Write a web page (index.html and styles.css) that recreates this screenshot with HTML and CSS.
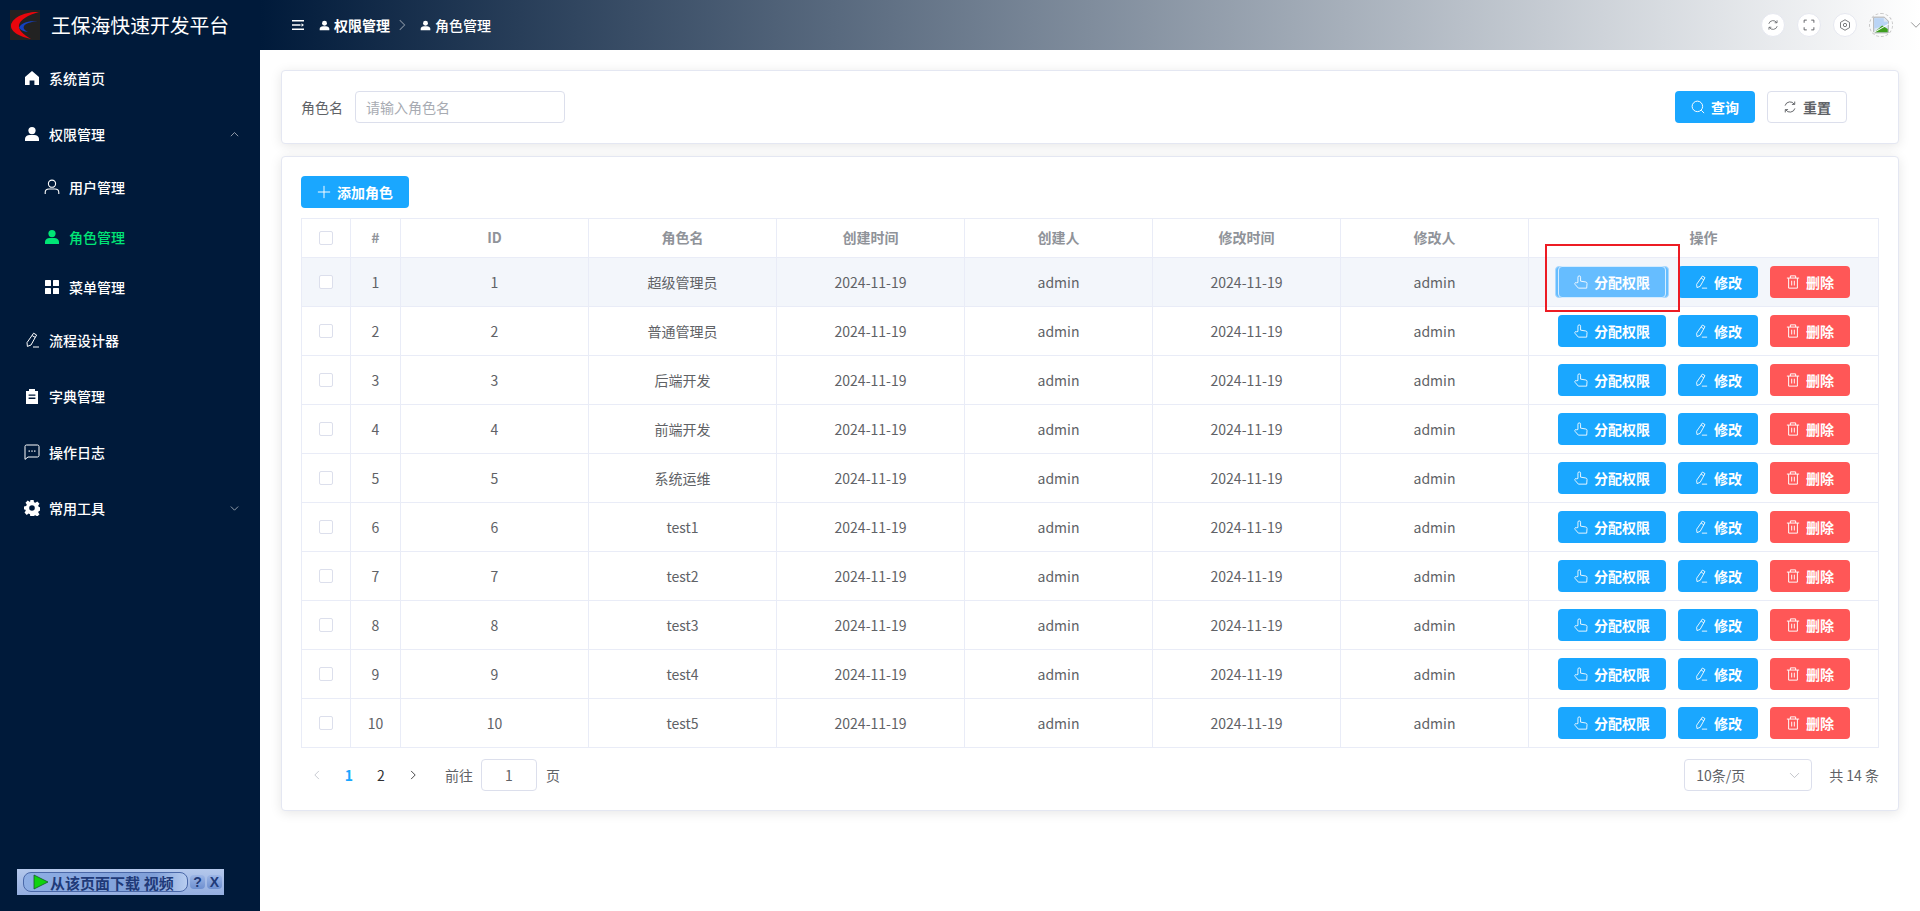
FILE: index.html
```html
<!DOCTYPE html>
<html lang="zh-CN">
<head>
    <meta charset="UTF-8">
    <title>角色管理</title>
    <link rel="stylesheet" href="styles.css">
</head>
<body>
    <svg class="sprites" aria-hidden="true">
        <symbol id="i-user-fill" viewBox="0 0 16 16"><circle cx="8" cy="4.6" r="3.6"/><path d="M1 15v-2.2C1 10.4 3.4 9 5.6 9h4.8c2.2 0 4.6 1.4 4.6 3.8V15z"/></symbol>
        <symbol id="i-user" viewBox="0 0 16 16"><g fill="none" stroke="currentColor" stroke-width="1.1"><circle cx="8" cy="4.7" r="3.6"/><path d="M1.2 15v-1.6c0-2 1.8-3.4 3.8-3.4h6c2 0 3.8 1.4 3.8 3.4V15"/></g></symbol>
        <symbol id="i-menu" viewBox="0 0 16 16"><rect x="1" y="1" width="6" height="6" rx=".6"/><rect x="9" y="1" width="6" height="6" rx=".6"/><rect x="1" y="9" width="6" height="6" rx=".6"/><rect x="9" y="9" width="6" height="6" rx=".6"/></symbol>
        <symbol id="i-home" viewBox="0 0 16 16"><path d="M8 1 1 7v8h4.6v-4.4h4.8V15H15V7z"/></symbol>
        <symbol id="i-edit" viewBox="0 0 16 16"><g fill="none" stroke="currentColor" stroke-width="1"><path d="M9.6 1.2 12.6 3 7 13l-3.6 1.4L3 10.6z"/><path d="M8.2 3.6l3 1.8M9 15h6"/></g></symbol>
        <symbol id="i-clip" viewBox="0 0 16 16"><path d="M5 1h6v2h3v13H2V3h3zM4.6 6.4v1.4h6.8V6.4zm0 3.2v1.4h6.8V9.6z" fill-rule="evenodd"/></symbol>
        <symbol id="i-chat" viewBox="0 0 16 16"><path d="M1 2.4C1 1.6 1.6 1 2.4 1h11.2c.8 0 1.4.6 1.4 1.4v9.2c0 .8-.6 1.4-1.4 1.4H4L1 15.4z" fill="none" stroke="currentColor" stroke-width="1"/><g><rect x="4.6" y="6.4" width="1.2" height="1.4"/><rect x="7.4" y="6.4" width="1.2" height="1.4"/><rect x="10.2" y="6.4" width="1.2" height="1.4"/></g></symbol>
        <symbol id="i-gear" viewBox="0 0 16 16"><path d="M6.400 0h3.200l.4 2.200 1.400.6 1.900-1.300 2.200 2.300-1.300 1.800.6 1.400 2.200.4v3.200l-2.200.4-.6 1.400 1.300 1.800-2.200 2.300-1.900-1.300-1.400.6-.4 2.200H6.400L6 14.200l-1.400-.6-1.900 1.300-2.200-2.300 1.300-1.800-.6-1.400L0 9.600V6.400L2.200 6l.6-1.400L1.500 2.800l2.200-2.300 1.900 1.300L6 2.200zM8 5.200a2.800 2.800 0 1 0 0 5.600 2.800 2.800 0 0 0 0-5.600z" fill-rule="evenodd"/></symbol>
        <symbol id="i-hand" viewBox="0 0 16 16"><path d="M4.500 8.500V2.500a1.500 1.500 0 0 1 3 0V7l6 1c.9.200 1.500.9 1.400 1.800L14.500 15H5L1.200 10.700c-.5-.7-.3-1.500.3-1.900.6-.4 1.300-.2 1.700.2z" fill="none" stroke="currentColor" stroke-width="1"/></symbol>
        <symbol id="i-trash" viewBox="0 0 16 16"><g fill="none" stroke="currentColor" stroke-width="1.100"><path d="M1 3.500h14M5 3.500V1h6v2.500M3 3.500V15h10V3.500M6.500 6.500v5.500M9.500 6.500v5.500"/></g></symbol>
        <symbol id="i-refresh" viewBox="0 0 16 16"><g fill="none" stroke="currentColor" stroke-width="1.100"><path d="M2.400 6.400A5.800 5.800 0 0 1 13 5M13.600 9.600A5.800 5.800 0 0 1 3 11"/><path d="M13.400 1.800V5h-3.200M2.600 14.200V11h3.200"/></g></symbol>
        <symbol id="i-search" viewBox="0 0 16 16"><g fill="none" stroke="currentColor" stroke-width="1.100"><circle cx="7.300" cy="7.300" r="6"/><path d="m11.700 11.700 3.300 3.300"/></g></symbol>
        <symbol id="i-full" viewBox="0 0 16 16"><path d="M1.500 5V1.500H5M11 1.500h3.500V5M14.500 11v3.500H11M5 14.500H1.500V11" fill="none" stroke="currentColor" stroke-width="1.300"/></symbol>
        <symbol id="i-cog" viewBox="0 0 16 16"><g fill="none" stroke="currentColor" stroke-width="1.100"><path d="M8 1l6 3.500v7L8 15l-6-3.500v-7z"/><circle cx="8" cy="8" r="2.200"/></g></symbol>
        <symbol id="i-down" viewBox="0 0 16 16"><path d="M1.500 4.500 8 11l6.500-6.500" fill="none" stroke="currentColor" stroke-width="1"/></symbol>
        <symbol id="i-up" viewBox="0 0 16 16"><path d="M1.500 11 8 4.500 14.500 11" fill="none" stroke="currentColor" stroke-width="1"/></symbol>
        <symbol id="i-left" viewBox="0 0 16 16"><path d="M11 1.500 4.500 8l6.500 6.500" fill="none" stroke="currentColor" stroke-width="1.400"/></symbol>
        <symbol id="i-right" viewBox="0 0 16 16"><path d="M5 1.500 11.500 8 5 14.500" fill="none" stroke="currentColor" stroke-width="1.400"/></symbol>
    </svg>

    <aside class="sidebar">
        <div class="brand">
            <svg class="logo" viewBox="0 0 30 30">
                <rect width="30" height="30" fill="#222"/>
                <path d="M29 2C15 1 2 8 1 15c-1 7 10 12 20 14-8-5-13-9-12-14C10 10 18 5 29 2z" fill="#e8060c"/>
                <path d="M29 12c-8-2-18 0-20 6 3 3 7 4 9 4-4-2-5-4-4-6 2-3 9-5 15-4z" fill="#1440c0"/>
            </svg>
            <span class="brand-name">王保海快速开发平台</span>
        </div>
        <nav class="nav">
            <a class="nav-item"><svg class="nav-icon"><use href="#i-home"/></svg>系统首页</a>
            <a class="nav-item"><svg class="nav-icon"><use href="#i-user-fill"/></svg>权限管理<svg class="nav-arrow"><use href="#i-up"/></svg></a>
            <a class="nav-sub"><svg class="nav-icon"><use href="#i-user"/></svg>用户管理</a>
            <a class="nav-sub active"><svg class="nav-icon"><use href="#i-user-fill"/></svg>角色管理</a>
            <a class="nav-sub"><svg class="nav-icon"><use href="#i-menu"/></svg>菜单管理</a>
            <a class="nav-item"><svg class="nav-icon"><use href="#i-edit"/></svg>流程设计器</a>
            <a class="nav-item"><svg class="nav-icon"><use href="#i-clip"/></svg>字典管理</a>
            <a class="nav-item"><svg class="nav-icon"><use href="#i-chat"/></svg>操作日志</a>
            <a class="nav-item"><svg class="nav-icon"><use href="#i-gear"/></svg>常用工具<svg class="nav-arrow"><use href="#i-down"/></svg></a>
        </nav>
    </aside>

    <header class="topbar">
        <svg class="hamburger" viewBox="0 0 12 10"><path d="M0 0h12v1.600H0zM0 4.200h8.500v1.600H0zM0 8.400h12V10H0zM9.500 3.200 12 5 9.500 6.800z"/></svg>
        <div class="crumbs">
            <span class="crumb strong"><svg class="crumb-icon"><use href="#i-user-fill"/></svg>权限管理</span>
            <svg class="crumb-sep"><use href="#i-right"/></svg>
            <span class="crumb"><svg class="crumb-icon"><use href="#i-user-fill"/></svg>角色管理</span>
        </div>
        <div class="top-actions">
            <span class="round-btn"><svg><use href="#i-refresh"/></svg></span>
            <span class="round-btn"><svg><use href="#i-full"/></svg></span>
            <span class="round-btn"><svg><use href="#i-cog"/></svg></span>
            <span class="avatar">
                <svg viewBox="0 0 16 16">
                    <path d="M1.500 1h9.500l3.500 3.500V15h-13z" fill="#dbe6f5" stroke="#a8a8a8" stroke-width=".8"/>
                    <path d="M2 2h8.500v3H14v3L2 11z" fill="#b9d4f5"/>
                    <path d="M2 14.500 9 8.500l5 3v3z" fill="#3e9f1e"/>
                    <path d="M1 15 15 7" stroke="#fff" stroke-width="1"/>
                </svg>
            </span>
            <svg class="avatar-arrow"><use href="#i-down"/></svg>
        </div>
    </header>

    <main class="main">
        <section class="card search-card">
            <label class="field-label">角色名</label>
            <input class="text-input" placeholder="请输入角色名">
            <div class="search-actions">
                <button class="btn primary wide"><svg class="btn-icon"><use href="#i-search"/></svg>查询</button>
                <button class="btn plain wide"><svg class="btn-icon"><use href="#i-refresh"/></svg>重置</button>
            </div>
        </section>

        <section class="card table-card">
            <button class="btn primary add-btn"><svg class="btn-icon plus" viewBox="0 0 16 16"><path d="M8 1v14M1 8h14" fill="none" stroke="currentColor" stroke-width="1.100"/></svg>添加角色</button>
            <table class="role-table">
                <colgroup>
                    <col class="col-check"><col class="col-index"><col class="col-data"><col class="col-data"><col class="col-data"><col class="col-data"><col class="col-data"><col class="col-data"><col>
                </colgroup>
                <thead>
                    <tr><th><span class="check"></span></th><th>#</th><th>ID</th><th>角色名</th><th>创建时间</th><th>创建人</th><th>修改时间</th><th>修改人</th><th>操作</th></tr>
                </thead>
                <tbody>
                    <tr class="hovered"><td><span class="check"></span></td><td>1</td><td>1</td><td>超级管理员</td><td>2024-11-19</td><td>admin</td><td>2024-11-19</td><td>admin</td><td><div class="row-actions"><span class="focus-mark"><button class="btn primary grant hover-btn"><svg class="btn-icon"><use href="#i-hand"/></svg>分配权限</button></span><button class="btn primary"><svg class="btn-icon"><use href="#i-edit"/></svg>修改</button><button class="btn danger"><svg class="btn-icon"><use href="#i-trash"/></svg>删除</button></div></td></tr>
                    <tr><td><span class="check"></span></td><td>2</td><td>2</td><td>普通管理员</td><td>2024-11-19</td><td>admin</td><td>2024-11-19</td><td>admin</td><td><div class="row-actions"><button class="btn primary grant"><svg class="btn-icon"><use href="#i-hand"/></svg>分配权限</button><button class="btn primary"><svg class="btn-icon"><use href="#i-edit"/></svg>修改</button><button class="btn danger"><svg class="btn-icon"><use href="#i-trash"/></svg>删除</button></div></td></tr>
                    <tr><td><span class="check"></span></td><td>3</td><td>3</td><td>后端开发</td><td>2024-11-19</td><td>admin</td><td>2024-11-19</td><td>admin</td><td><div class="row-actions"><button class="btn primary grant"><svg class="btn-icon"><use href="#i-hand"/></svg>分配权限</button><button class="btn primary"><svg class="btn-icon"><use href="#i-edit"/></svg>修改</button><button class="btn danger"><svg class="btn-icon"><use href="#i-trash"/></svg>删除</button></div></td></tr>
                    <tr><td><span class="check"></span></td><td>4</td><td>4</td><td>前端开发</td><td>2024-11-19</td><td>admin</td><td>2024-11-19</td><td>admin</td><td><div class="row-actions"><button class="btn primary grant"><svg class="btn-icon"><use href="#i-hand"/></svg>分配权限</button><button class="btn primary"><svg class="btn-icon"><use href="#i-edit"/></svg>修改</button><button class="btn danger"><svg class="btn-icon"><use href="#i-trash"/></svg>删除</button></div></td></tr>
                    <tr><td><span class="check"></span></td><td>5</td><td>5</td><td>系统运维</td><td>2024-11-19</td><td>admin</td><td>2024-11-19</td><td>admin</td><td><div class="row-actions"><button class="btn primary grant"><svg class="btn-icon"><use href="#i-hand"/></svg>分配权限</button><button class="btn primary"><svg class="btn-icon"><use href="#i-edit"/></svg>修改</button><button class="btn danger"><svg class="btn-icon"><use href="#i-trash"/></svg>删除</button></div></td></tr>
                    <tr><td><span class="check"></span></td><td>6</td><td>6</td><td>test1</td><td>2024-11-19</td><td>admin</td><td>2024-11-19</td><td>admin</td><td><div class="row-actions"><button class="btn primary grant"><svg class="btn-icon"><use href="#i-hand"/></svg>分配权限</button><button class="btn primary"><svg class="btn-icon"><use href="#i-edit"/></svg>修改</button><button class="btn danger"><svg class="btn-icon"><use href="#i-trash"/></svg>删除</button></div></td></tr>
                    <tr><td><span class="check"></span></td><td>7</td><td>7</td><td>test2</td><td>2024-11-19</td><td>admin</td><td>2024-11-19</td><td>admin</td><td><div class="row-actions"><button class="btn primary grant"><svg class="btn-icon"><use href="#i-hand"/></svg>分配权限</button><button class="btn primary"><svg class="btn-icon"><use href="#i-edit"/></svg>修改</button><button class="btn danger"><svg class="btn-icon"><use href="#i-trash"/></svg>删除</button></div></td></tr>
                    <tr><td><span class="check"></span></td><td>8</td><td>8</td><td>test3</td><td>2024-11-19</td><td>admin</td><td>2024-11-19</td><td>admin</td><td><div class="row-actions"><button class="btn primary grant"><svg class="btn-icon"><use href="#i-hand"/></svg>分配权限</button><button class="btn primary"><svg class="btn-icon"><use href="#i-edit"/></svg>修改</button><button class="btn danger"><svg class="btn-icon"><use href="#i-trash"/></svg>删除</button></div></td></tr>
                    <tr><td><span class="check"></span></td><td>9</td><td>9</td><td>test4</td><td>2024-11-19</td><td>admin</td><td>2024-11-19</td><td>admin</td><td><div class="row-actions"><button class="btn primary grant"><svg class="btn-icon"><use href="#i-hand"/></svg>分配权限</button><button class="btn primary"><svg class="btn-icon"><use href="#i-edit"/></svg>修改</button><button class="btn danger"><svg class="btn-icon"><use href="#i-trash"/></svg>删除</button></div></td></tr>
                    <tr><td><span class="check"></span></td><td>10</td><td>10</td><td>test5</td><td>2024-11-19</td><td>admin</td><td>2024-11-19</td><td>admin</td><td><div class="row-actions"><button class="btn primary grant"><svg class="btn-icon"><use href="#i-hand"/></svg>分配权限</button><button class="btn primary"><svg class="btn-icon"><use href="#i-edit"/></svg>修改</button><button class="btn danger"><svg class="btn-icon"><use href="#i-trash"/></svg>删除</button></div></td></tr>
                </tbody>
            </table>
            <div class="pager">
                <svg class="pager-arrow disabled"><use href="#i-left"/></svg>
                <span class="pager-num current">1</span>
                <span class="pager-num">2</span>
                <svg class="pager-arrow"><use href="#i-right"/></svg>
                <span class="pager-text goto">前往</span>
                <span class="pager-box">1</span>
                <span class="pager-text">页</span>
                <span class="pager-select">10条/页<svg class="select-arrow"><use href="#i-down"/></svg></span>
                <span class="pager-text total">共 14 条</span>
            </div>
        </section>
    </main>

    <div class="download-bar">
        <span class="download-main"><svg class="play" viewBox="0 0 16 16"><path d="M1 1l14 7-14 7z" fill="#0fd30f" stroke="#145c2a" stroke-width=".8"/></svg>从该页面下载 视频</span>
        <span class="download-small">?</span>
        <span class="download-small">X</span>
    </div>
</body>
</html>
```

FILE: styles.css
```css
*, *::before, *::after {
    margin: 0;
    padding: 0;
    box-sizing: border-box;
}

html, body {
    height: 100%;
    overflow: hidden;
}

body {
    display: grid;
    grid-template-columns: 260px minmax(0, 1fr);
    grid-template-rows: 50px 1fr;
    font-family: "Noto Sans CJK SC", "Noto Sans", sans-serif;
    font-size: 14px;
    color: #606266;
    background: #fff;
}

svg {
    fill: currentColor;
}

.sprites {
    display: none;
}

/* sidebar */
.sidebar {
    grid-column: 1;
    grid-row: 1 / 3;
    background: #001a3a;
    color: #fff;
}

.brand {
    height: 50px;
    display: flex;
    align-items: center;
    padding-left: 10px;
}

.logo {
    width: 30px;
    height: 30px;
    margin-right: 11px;
}

.brand-name {
    font-size: 19.8px;
    line-height: 30px;
}

.nav-item,
.nav-sub {
    display: flex;
    align-items: center;
    font-size: 14px;
    font-weight: 500;
}

.nav-item {
    height: 56px;
    padding-left: 24px;
}

.nav-sub {
    height: 50px;
    padding-left: 44px;
}

.nav-sub.active {
    color: #00e676;
}

.nav-icon {
    width: 16px;
    height: 16px;
    margin-right: 9px;
    flex: none;
}

.nav-arrow {
    width: 9px;
    height: 9px;
    margin-left: auto;
    margin-right: 21px;
}

/* top bar */
.topbar {
    grid-column: 2;
    grid-row: 1;
    display: flex;
    align-items: center;
    padding-left: 32px;
    color: #fff;
    background: linear-gradient(to right, #001a3a 0%, #fff 100%);
    overflow: hidden;
}

.hamburger {
    width: 12px;
    height: 10px;
}

.crumbs {
    display: flex;
    align-items: center;
    margin-left: 15px;
    font-size: 14px;
}

.crumb {
    display: flex;
    align-items: center;
    font-weight: 500;
}

.crumb.strong {
    font-weight: 700;
}

.crumb-icon {
    width: 11px;
    height: 11px;
    margin-right: 4px;
}

.crumb-sep {
    width: 12px;
    height: 12px;
    margin: 0 12px 0 6px;
    color: #7d8a9b;
}

.top-actions {
    margin-left: auto;
    display: flex;
    align-items: center;
    gap: 12px;
    margin-right: -2px;
    color: #606266;
}

.round-btn {
    width: 24px;
    height: 24px;
    border-radius: 50%;
    background: #fff;
    border: 1px solid #e6e8f0;
    display: flex;
    align-items: center;
    justify-content: center;
}

.round-btn svg {
    width: 12px;
    height: 12px;
}

.avatar {
    width: 24px;
    height: 24px;
    border-radius: 50%;
    overflow: hidden;
    border: 1px dashed #c8c8c8;
    display: flex;
    align-items: center;
    justify-content: center;
}

.avatar svg {
    width: 18px;
    height: 18px;
}

.avatar-arrow {
    width: 12px;
    height: 12px;
    color: #777;
    margin-left: 5px;
}

/* main */
.main {
    padding: 20px 21px 0;
    grid-column: 2;
    grid-row: 2;
    min-width: 0;
}

.card {
    background: #fff;
    border: 1px solid #e4e7f2;
    border-radius: 4px;
    box-shadow: 0 2px 12px rgba(0, 0, 0, 0.1);
    padding: 19px;
}

.search-card {
    display: flex;
    align-items: center;
    height: 74px;
    margin-bottom: 12px;
}

.field-label {
    width: 54px;
    color: #606266;
}

.text-input {
    width: 210px;
    height: 32px;
    border: 1px solid #dcdfec;
    border-radius: 4px;
    padding: 0 10px;
    font: inherit;
    outline: none;
}

.text-input::placeholder {
    color: #a8abb2;
}

.search-actions {
    margin-left: auto;
    display: flex;
    gap: 12px;
    margin-right: 32px;
}

.btn {
    height: 32px;
    display: inline-flex;
    align-items: center;
    justify-content: center;
    border: 1px solid transparent;
    border-radius: 4px;
    font: inherit;
    font-weight: 600;
    white-space: nowrap;
}

.btn.primary {
    background: #1aa7ff;
    color: #fff;
}

.btn.danger {
    background: #ff5757;
    color: #fff;
    width: 80px;
}

.btn.plain {
    background: #fff;
    border-color: #dcdfec;
    color: #606266;
}

.btn.wide {
    width: 80px;
}

.btn-icon {
    width: 14px;
    height: 14px;
    margin-right: 6px;
    flex: none;
}

.add-btn {
    width: 108px;
    display: flex;
    margin-bottom: 10px;
}

/* table */
.role-table {
    width: 100%;
    table-layout: fixed;
    border-collapse: collapse;
}

.role-table th,
.role-table td {
    border: 1px solid #e9ecf7;
    text-align: center;
    font-size: 14px;
}

.role-table th {
    height: 39px;
    padding-bottom: 2px;
    color: #909399;
    font-weight: 700;
}

.role-table td {
    height: 49px;
    color: #606266;
}

.role-table tr.hovered td {
    background: #f3f6fb;
}

.col-check {
    width: 49px;
}

.col-index {
    width: 50px;
}

.col-data {
    width: 188px;
}

.check {
    display: block;
    width: 14px;
    height: 14px;
    margin: 0 auto;
    border: 1px solid #dcdfec;
    border-radius: 2px;
    background: #fff;
}

.role-table th .check {
    margin-top: 2px;
}

.row-actions {
    display: flex;
    gap: 12px;
    padding-left: 29px;
}

.row-actions .btn.primary {
    width: 80px;
    flex: none;
}

.row-actions .btn.primary.grant {
    width: 108px;
}

.row-actions .btn.danger {
    flex: none;
}

.focus-mark {
    position: relative;
    display: inline-flex;
}

/* red annotation box from the screenshot */
.focus-mark::after {
    content: "";
    position: absolute;
    left: -13px;
    top: -22px;
    width: 135px;
    height: 68px;
    border: 2px solid #ed1c24;
}

.focus-mark::before {
    content: "";
    position: absolute;
    left: -3px;
    right: -3px;
    top: 0;
    bottom: 0;
    border: 1px solid #a9d8ff;
    border-radius: 4px;
    background: #66bdff;
}

.btn.primary.hover-btn {
    position: relative;
    background: #66bdff;
    border-color: #d4ecff;
}

/* pager */
.pager {
    display: flex;
    align-items: center;
    height: 32px;
    margin-top: 11px;
}

.pager-arrow {
    width: 10px;
    height: 10px;
    color: #303133;
    margin-left: 11px;
}

.pager-arrow.disabled {
    color: #c0c4cc;
}

.pager-num {
    width: 32px;
    text-align: center;
    color: #303133;
}

.pager-num.current {
    color: #1aa7ff;
    font-weight: 700;
    margin-left: 11px;
}

.pager-text {
    color: #606266;
}

.goto {
    margin-left: 27px;
}

.pager-box {
    width: 56px;
    height: 32px;
    margin: 0 9px 0 8px;
    border: 1px solid #dcdfec;
    border-radius: 4px;
    display: flex;
    align-items: center;
    justify-content: center;
}

.pager-select {
    width: 128px;
    height: 32px;
    margin-left: auto;
    border: 1px solid #dcdfec;
    border-radius: 4px;
    display: flex;
    align-items: center;
    padding: 0 11px;
}

.select-arrow {
    width: 11px;
    height: 11px;
    margin-left: auto;
    color: #a8abb2;
}

.total {
    margin-left: 17px;
}

/* video download helper sitting over the page */
.download-bar {
    position: fixed;
    left: 17px;
    top: 869px;
    width: 207px;
    height: 26px;
    display: flex;
    align-items: center;
    gap: 2px;
    padding: 0 2px 0 6px;
    background: linear-gradient(#b4c8ec, #94aee0);
    font-family: "Liberation Serif", "Noto Sans CJK SC", serif;
}

.download-main {
    width: 166px;
    height: 20px;
    display: flex;
    align-items: center;
    border: 1px solid #4a68a8;
    border-radius: 8px;
    background: linear-gradient(to right, #8eaee4, #7f9fd8 80%, #b8cdf0);
    color: #1f3a78;
    font-size: 15px;
    font-weight: 700;
    padding-left: 9px;
    white-space: nowrap;
}

.play {
    width: 16px;
    height: 16px;
    margin-right: 1px;
    flex: none;
}

.download-small {
    width: 15px;
    height: 14px;
    border-radius: 4px;
    background: linear-gradient(#9db6e6, #6d8fd0);
    color: #1f3a78;
    font-family: "Liberation Sans", sans-serif;
    font-size: 14px;
    font-weight: 700;
    line-height: 14px;
    text-align: center;
}
```
